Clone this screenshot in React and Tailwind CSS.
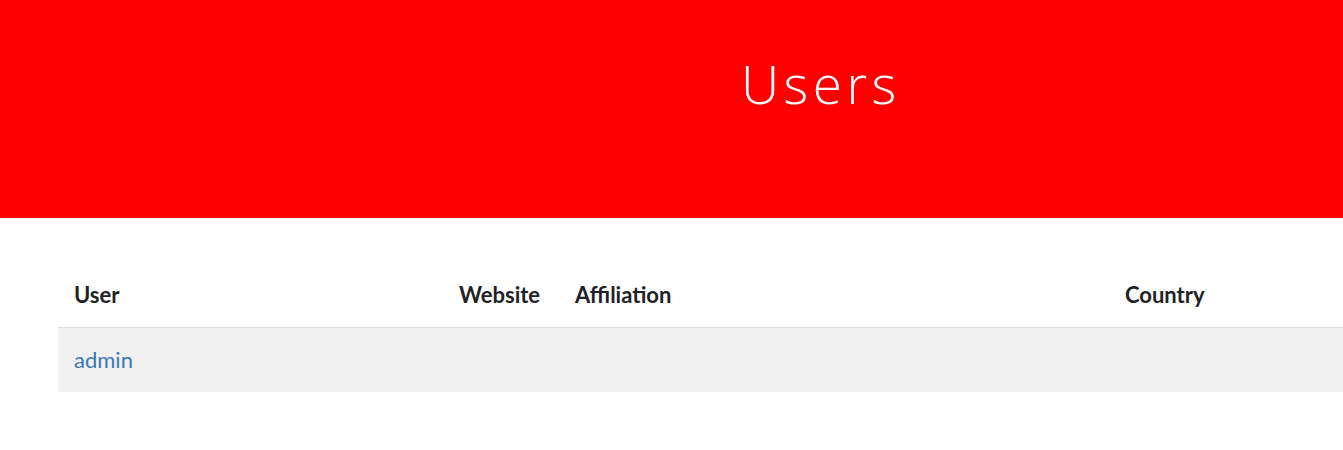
export default function App() {
  return (
    <div className="min-h-screen bg-white overflow-hidden" style={{ fontFamily: 'Lato, "Open Sans", sans-serif' }}>
      <div className="h-[218px] bg-[#ff0000] pt-[52px] pl-[741px]">
        <h1
          className="text-[53px] leading-[1.2] font-light text-white tracking-[4.5px]"
          style={{ fontFamily: '"Open Sans", Lato, sans-serif' }}
        >
          Users
        </h1>
      </div>

      <div className="pl-[58px] pt-[45px]">
        <table className="w-full border-collapse text-[22px] leading-[32px] text-[#1f2326]">
          <thead>
            <tr className="border-b border-[#dedede]">
              <th className="w-[385px] px-4 py-4 text-left font-bold">User</th>
              <th className="w-[116px] px-4 py-4 text-left font-bold">Website</th>
              <th className="w-[550px] px-4 py-4 text-left font-bold">Affiliation</th>
              <th className="px-4 py-4 text-left font-bold">Country</th>
            </tr>
          </thead>
          <tbody>
            <tr className="bg-[#f1f1f1]">
              <td className="px-4 py-4">
                <a href="#" className="text-[#3a77b7]">admin</a>
              </td>
              <td className="px-4 py-4"></td>
              <td className="px-4 py-4"></td>
              <td className="px-4 py-4"></td>
            </tr>
          </tbody>
        </table>
      </div>
    </div>
  );
}
